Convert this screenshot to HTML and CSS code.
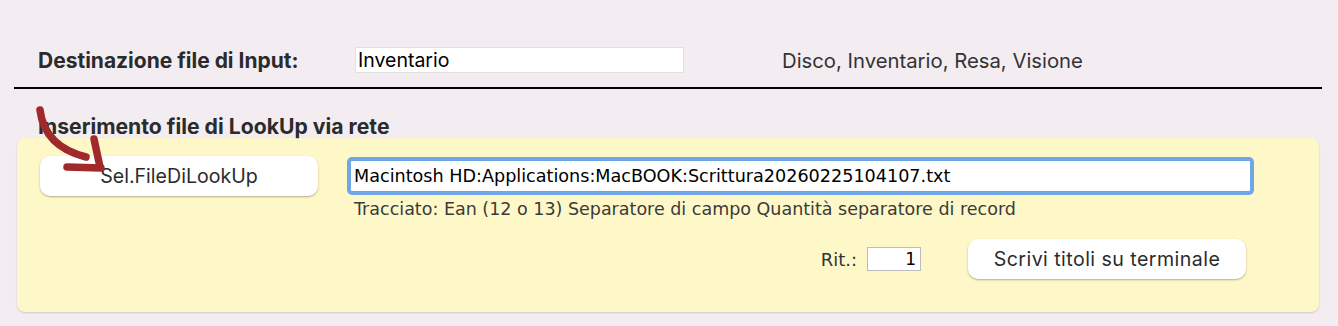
FILE: index.html
```html
<!DOCTYPE html>
<html lang="it">
<head>
<meta charset="utf-8">
<title>LookUp</title>
<link rel="stylesheet" href="styles.css">
</head>
<body>
<div class="page">
  <div class="dest-row">
    <span class="label">Destinazione file di Input:</span>
    <div class="field dest-field">Inventario</div>
    <span class="hint">Disco, Inventario, Resa, Visione</span>
  </div>
  <div class="divider"></div>
  <div class="section-title">Inserimento file di LookUp via rete</div>
  <div class="panel">
    <button class="btn btn-select">Sel.FileDiLookUp</button>
    <div class="right-col">
      <div class="path-field">Macintosh HD:Applications:MacBOOK:Scrittura20260225104107.txt</div>
      <div class="layout-note">Tracciato: Ean (12 o 13) Separatore di campo Quantità separatore di record</div>
      <div class="action-row">
        <span class="rit-label">Rit.:</span>
        <div class="rit-field">1</div>
        <button class="btn btn-write">Scrivi titoli su terminale</button>
      </div>
    </div>
  </div>
  <svg class="arrow" width="120" height="180" viewBox="0 0 120 180">
    <path d="M40 110 C 43 134 58 150 86 157" />
    <path d="M94 139 L 100 167" />
    <path d="M67 167 L 101 168" />
  </svg>
</div>
</body>
</html>
```
FILE: styles.css
```css
html, body {
  margin: 0;
  padding: 0;
}
body {
  background: #f3edf2;
  font-family: "Inter", "Liberation Sans", sans-serif;
  color: #2b2b2b;
  width: 1338px;
  height: 326px;
  overflow: hidden;
}
.page {
  position: relative;
  padding-top: 47px;
}
.dest-row {
  display: flex;
  align-items: center;
  height: 26px;
  padding-left: 38px;
}
.label {
  width: 317px;
  font-weight: 700;
  font-size: 21px;
  color: #2b2b2b;
  white-space: nowrap;
}
.field {
  box-sizing: border-box;
  background: #fff;
  border: 1px solid #e3e0e2;
  height: 26px;
  line-height: 24px;
  font-size: 19.5px;
  color: #000;
  padding-left: 2px;
}
.dest-field {
  width: 329px;
}
.hint {
  margin-left: 98px;
  font-size: 20.3px;
  color: #333;
}
.divider {
  margin: 14px 16px 0 14px;
  height: 2px;
  background: #000;
}
.section-title {
  margin-top: 25px;
  padding-left: 38px;
  font-weight: 700;
  font-size: 21.2px;
  line-height: 24px;
  height: 24px;
  color: #2b2b2b;
  white-space: nowrap;
}
.panel {
  box-sizing: border-box;
  margin: 0 0 0 17px;
  width: 1302px;
  height: 174px;
  background: #fef8c8;
  border-radius: 8px;
  box-shadow: 0 1px 2px rgba(0, 0, 0, 0.15);
  padding: 18px 0 0 23px;
  display: flex;
  gap: 29px;
  align-items: flex-start;
}
.btn {
  box-sizing: border-box;
  background: #fff;
  border: none;
  border-radius: 10px;
  box-shadow: 0 1px 2px rgba(0, 0, 0, 0.3);
  width: 278px;
  height: 40px;
  font-family: "Inter", "Liberation Sans", sans-serif;
  font-size: 19.6px;
  color: #2b2b2b;
  padding: 0;
}
.btn-write {
  letter-spacing: 0.45px;
}
.right-col {
  width: 907px;
  padding-top: 1px;
  display: flex;
  flex-direction: column;
}
.path-field {
  box-sizing: border-box;
  height: 38px;
  border: 4px solid #6fa6e8;
  border-radius: 5px;
  background: #fff;
  padding-left: 3px;
  line-height: 30px;
  font-family: "DejaVu Sans", sans-serif;
  font-size: 17.6px;
  color: #000;
  white-space: nowrap;
  overflow: hidden;
}
.layout-note {
  margin-top: 4px;
  padding-left: 7px;
  font-family: "DejaVu Sans", sans-serif;
  font-size: 17.5px;
  line-height: 20px;
  color: #3a3a3a;
  white-space: nowrap;
}
.action-row {
  margin-top: 20px;
  display: flex;
  align-items: center;
  justify-content: flex-end;
  padding-right: 8px;
}
.rit-label {
  font-family: "DejaVu Sans", sans-serif;
  font-size: 18px;
  color: #333;
  margin-right: 10px;
}
.rit-field {
  box-sizing: border-box;
  width: 54px;
  height: 24px;
  background: #fff;
  border: 1px solid #bdbdbd;
  text-align: right;
  padding-right: 4px;
  line-height: 22px;
  font-family: "DejaVu Sans", sans-serif;
  font-size: 17px;
  color: #000;
  margin-right: 47px;
}
.arrow {
  position: absolute;
  left: 0;
  top: 0;
  overflow: visible;
}
.arrow path {
  fill: none;
  stroke: #a0292b;
  stroke-width: 7.5;
  stroke-linecap: round;
  stroke-linejoin: round;
}
```
